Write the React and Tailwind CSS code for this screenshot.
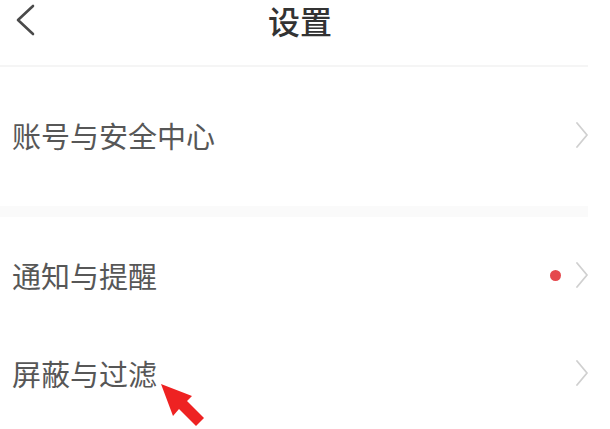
import React from 'react';

const Chevron = () => (
  <svg width="12" height="26" viewBox="0 0 12 26" className="shrink-0">
    <polyline points="1,1 11,13 1,25" fill="none" stroke="#d0d0d0" strokeWidth="1.8" strokeLinecap="round" strokeLinejoin="round" />
  </svg>
);

const Row = ({ label, dot, height }) => (
  <div className={`flex items-center justify-between pl-[12px] ${height}`}>
    <span className="text-[29px] leading-none text-[#575757]">{label}</span>
    <div className="flex items-center gap-[15px]">
      {dot && <span className="w-[11px] h-[11px] rounded-full bg-[#e5484d]" />}
      <Chevron />
    </div>
  </div>
);

export default function App() {
  return (
    <div className="relative w-[610px] h-[429px] overflow-hidden bg-white font-['Noto_Sans_CJK_SC','Noto_Sans',sans-serif]">
      <div className="w-[588px]">
        {/* 顶部导航 */}
        <div className="h-[65px] w-[600px]">
          <div className="grid grid-cols-[60px_1fr_60px] h-[40px] items-center">
            <svg width="40" height="38" viewBox="0 0 40 38">
              <polyline points="33,5 18,19 33,33" fill="none" stroke="#4a4a4a" strokeWidth="2.6" strokeLinecap="round" strokeLinejoin="round" />
            </svg>
            <div className="text-center text-[32px] leading-[40px] font-medium text-[#333333]">设置</div>
            <div />
          </div>
        </div>
        <div className="h-[2px] bg-[#f5f5f5]" />

        <Row label="账号与安全中心" height="h-[136px]" />
        <div className="h-[3px]" />
        <div className="h-[11px] bg-[#fafafa]" />
        <div className="h-[9px]" />

        <Row label="通知与提醒" dot height="h-[98px]" />
        <Row label="屏蔽与过滤" height="h-[98px]" />
      </div>

      {/* 红色箭头标注 */}
      <svg className="absolute left-0 top-0 pointer-events-none" width="610" height="429" viewBox="0 0 610 429">
        <polygon
          points="161,384 192,396 187,401 204,418 196,426 179,409 173,416"
          fill="#ee2222"
        />
      </svg>
    </div>
  );
}
